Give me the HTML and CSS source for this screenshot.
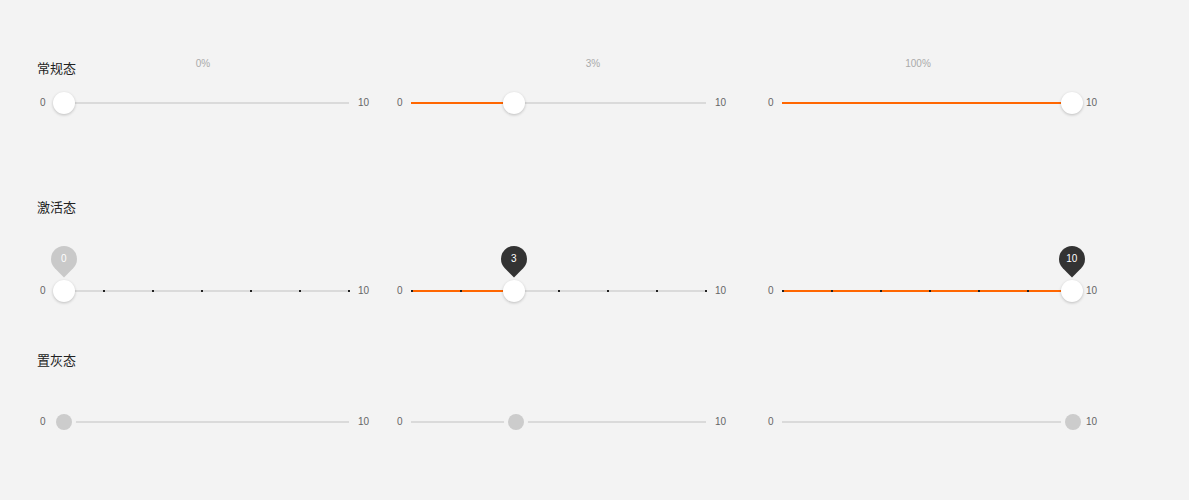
FILE: index.html
```html
<!DOCTYPE html>
<html lang="zh">
<head>
<meta charset="utf-8">
<title>Slider</title>
<link rel="stylesheet" href="styles.css">
</head>
<body>
<main class="page">
  <section class="section section-normal">
    <div class="header">
      <h2 class="title title-first">常规态</h2>
      <span class="pct">0%</span>
      <span class="pct pct-2">3%</span>
      <span class="pct pct-3">100%</span>
    </div>
    <div class="row row-normal">
      <div class="slider">
        <span class="lim">0</span>
        <div class="track">
          <div class="rail"></div>
          <div class="thumb" style="left:10px"></div>
        </div>
        <span class="lim lim-max">10</span>
      </div>
      <div class="slider">
        <span class="lim">0</span>
        <div class="track">
          <div class="rail"></div>
          <div class="fill" style="width:103px"></div>
          <div class="thumb" style="left:103px"></div>
        </div>
        <span class="lim lim-max">10</span>
      </div>
      <div class="slider">
        <span class="lim">0</span>
        <div class="track">
          <div class="rail"></div>
          <div class="fill" style="width:290px"></div>
          <div class="thumb" style="left:290px"></div>
        </div>
        <span class="lim lim-max">10</span>
      </div>
    </div>
  </section>

  <section class="section section-active">
    <h2 class="title">激活态</h2>
    <div class="row row-active">
      <div class="slider">
        <span class="lim">0</span>
        <div class="track">
          <div class="rail"></div>
          <div class="ticks"><i></i><i></i><i></i><i></i><i></i><i></i><i></i></div>
          <div class="thumb" style="left:10px">
            <div class="pin pin-muted"><span class="pin-text">0</span></div>
          </div>
        </div>
        <span class="lim lim-max">10</span>
      </div>
      <div class="slider">
        <span class="lim">0</span>
        <div class="track">
          <div class="rail"></div>
          <div class="fill" style="width:103px"></div>
          <div class="ticks"><i></i><i></i><i></i><i></i><i></i><i></i><i></i></div>
          <div class="thumb" style="left:103px">
            <div class="pin"><span class="pin-text">3</span></div>
          </div>
        </div>
        <span class="lim lim-max">10</span>
      </div>
      <div class="slider">
        <span class="lim">0</span>
        <div class="track">
          <div class="rail"></div>
          <div class="fill" style="width:290px"></div>
          <div class="ticks"><i></i><i></i><i></i><i></i><i></i><i></i><i></i></div>
          <div class="thumb" style="left:290px">
            <div class="pin"><span class="pin-text">10</span></div>
          </div>
        </div>
        <span class="lim lim-max">10</span>
      </div>
    </div>
  </section>

  <section class="section section-disabled">
    <h2 class="title">置灰态</h2>
    <div class="row row-disabled">
      <div class="slider is-disabled">
        <span class="lim">0</span>
        <div class="track">
          <div class="rail"></div>
          <div class="thumb" style="left:10px"></div>
        </div>
        <span class="lim lim-max">10</span>
      </div>
      <div class="slider is-disabled">
        <span class="lim">0</span>
        <div class="track">
          <div class="rail"></div>
          <div class="thumb" style="left:105px"></div>
        </div>
        <span class="lim lim-max">10</span>
      </div>
      <div class="slider is-disabled">
        <span class="lim">0</span>
        <div class="track">
          <div class="rail"></div>
          <div class="thumb" style="left:291px"></div>
        </div>
        <span class="lim lim-max">10</span>
      </div>
    </div>
  </section>
</main>
</body>
</html>
```

FILE: styles.css
```css
* { box-sizing: border-box; }

html, body {
  margin: 0;
  background: #f3f3f3;
}

body {
  font-family: "Liberation Sans", "Noto Sans CJK SC", sans-serif;
  color: #333;
}

.page {
  padding: 56px 0 0 37px;
}

.title {
  margin: 0;
  font-size: 13px;
  line-height: 18px;
  font-weight: normal;
  color: #222;
  font-family: "Noto Sans CJK SC", sans-serif;
}

.header {
  display: flex;
  align-items: flex-start;
}

.title-first {
  width: 136px;
  flex: none;
  margin-top: 3px;
}

.pct {
  flex: none;
  width: 60px;
  margin-top: 1px;
  text-align: center;
  font-size: 10px;
  line-height: 14px;
  color: #aaa;
}

.pct-2 { margin-left: 330px; }
.pct-3 { margin-left: 265px; }

.row {
  display: grid;
  grid-template-columns: 357px 371px 1fr;
  padding-left: 3px;
}

.row-normal { margin-top: 15px; }
.section-active { margin-top: 84px; }
.row-active { margin-top: 64px; }
.section-disabled { margin-top: 49px; }
.row-disabled { margin-top: 42px; }

.slider {
  display: flex;
  align-items: center;
  height: 22px;
}

.lim {
  flex: none;
  width: 14px;
  font-size: 10px;
  line-height: 12px;
  color: #666;
}

.lim-max {
  width: auto;
  margin-left: 9px;
}

.track {
  position: relative;
  flex: none;
  width: 295px;
  height: 22px;
  display: flex;
  align-items: center;
}

.rail {
  width: 100%;
  height: 2px;
  background: #dadada;
}

.fill {
  position: absolute;
  left: 0;
  top: 10px;
  height: 2px;
  background: #ff6600;
}

.ticks {
  position: absolute;
  left: 0;
  top: 10px;
  width: 296px;
  height: 2px;
  display: flex;
  justify-content: space-between;
}

.ticks i {
  display: block;
  width: 2px;
  height: 2px;
  background: #222;
}

.thumb {
  position: absolute;
  top: 0;
  width: 22px;
  height: 22px;
  margin-left: -11px;
  border-radius: 50%;
  background: #fff;
  box-shadow: 0 1px 3px rgba(0, 0, 0, 0.22);
}

.is-disabled .thumb {
  top: 3px;
  width: 16px;
  height: 16px;
  margin-left: -8px;
  background: #cccccc;
  box-shadow: 0 0 0 4px #f3f3f3;
}

.pin {
  position: absolute;
  left: -2px;
  top: -34px;
  width: 26px;
  height: 26px;
  border-radius: 50% 50% 0 50%;
  background: #333;
  transform: rotate(45deg);
  display: flex;
  align-items: center;
  justify-content: center;
}

.pin-muted {
  background: #c9c9c9;
}

.pin-text {
  transform: rotate(-45deg);
  font-size: 10px;
  line-height: 12px;
  color: #fff;
}
```
